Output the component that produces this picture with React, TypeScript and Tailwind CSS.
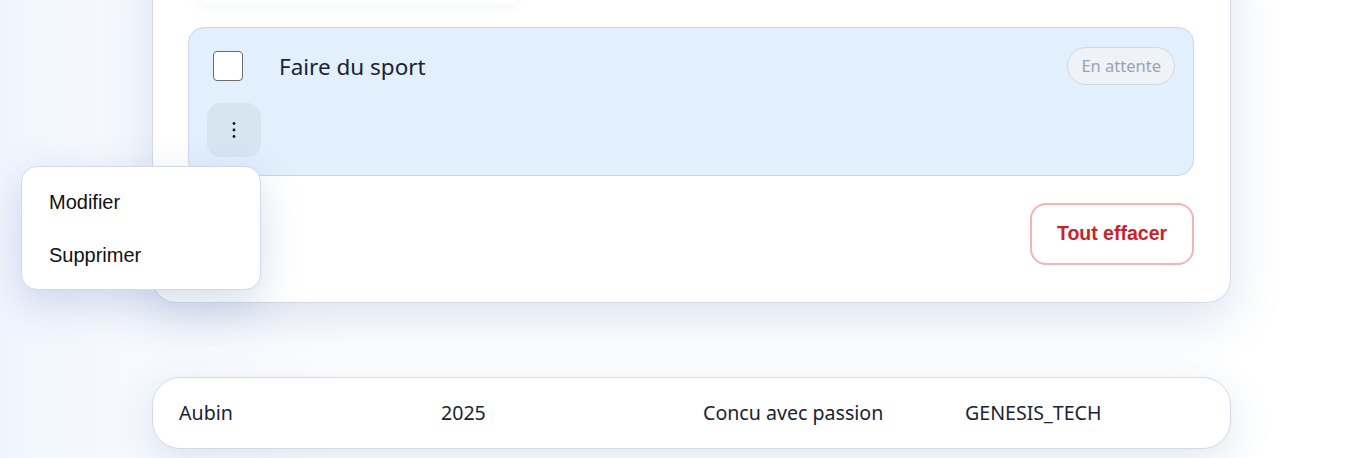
import React from "react";

const sans = { fontFamily: '"Noto Sans", "Open Sans", sans-serif' };
const arial = { fontFamily: '"Liberation Sans", Arial, sans-serif' };

function Dots() {
  return (
    <svg width="6" height="18" viewBox="0 0 6 18" fill="#111827">
      <circle cx="3" cy="2.5" r="1.4" />
      <circle cx="3" cy="9" r="1.4" />
      <circle cx="3" cy="15.5" r="1.4" />
    </svg>
  );
}

export default function App() {
  return (
    <div
      className="relative h-[458px] w-[1367px] overflow-hidden bg-[linear-gradient(90deg,#f0f5fd_0%,#f6f9fe_10%,#ffffff_25%,#ffffff_100%)]"
      style={sans}
    >
      {/* main card */}
      <div className="ml-[152px] mt-[-60px] w-[1079px] rounded-[24px] border border-[#d3dae5] bg-white pb-[37px] pt-[60px] shadow-[0_18px_50px_rgba(70,100,170,0.18)]">
        <div className="relative">
          <div className="absolute left-[40px] top-[-40px] h-[44px] w-[330px] rounded-[20px] bg-white shadow-[0_4px_12px_rgba(100,120,160,0.05)]" />
        </div>
        <div className="relative ml-[35px] mr-[36px] mt-[26px] rounded-[16px] border border-[#c9d7e6] bg-[#e2effc] px-[18px] pb-[18px] pt-[19px]">
          <div className="flex h-[38px] items-center justify-between">
            <div className="flex items-center">
              <div className="ml-[6px] h-[30px] w-[30px] rounded-[4px] border-[1.5px] border-[#6b6b6b] bg-white" />
              <span className="ml-[36px] mt-[3px] text-[22.5px] leading-none text-[#1a2233]">Faire du sport</span>
            </div>
            <span className="flex h-[38px] items-center rounded-full border border-[#d3d9e2] bg-[#eff2f7] px-[13px] text-[16.5px] text-[#9aa3b5]">
              En attente
            </span>
          </div>
          <div className="mt-[18px] flex h-[54px] w-[54px] items-center justify-center rounded-[14px] bg-[#d7e5f1]">
            <Dots />
          </div>
        </div>
        <div className="mr-[36px] mt-[27px] flex justify-end">
          <button
            className="h-[62px] w-[164px] rounded-[16px] border-2 border-[#fcb0b3] bg-white text-[19.5px] font-bold text-[#c8232b]"
            style={arial}
          >
            Tout effacer
          </button>
        </div>
      </div>

      {/* footer */}
      <div className="ml-[152px] mt-[74px] flex h-[72px] w-[1079px] items-center rounded-[28px] border border-[#d3dae5] bg-white pl-[26px] text-[19.6px] text-[#1a2233] shadow-[0_12px_40px_rgba(70,100,170,0.16)]">
        <div className="w-[262px]">Aubin</div>
        <div className="w-[262px]">2025</div>
        <div className="w-[262px]">Concu avec passion</div>
        <div className="w-[262px]">GENESIS_TECH</div>
      </div>

      {/* dropdown menu */}
      <div
        className="absolute left-[21px] top-[166px] w-[240px] rounded-[16px] border border-[#d3dae5] bg-white py-[8px] shadow-[0_14px_40px_rgba(70,100,170,0.22)]"
        style={arial}
      >
        <div className="flex h-[53px] items-center pl-[27px] text-[20px] text-[#111]">Modifier</div>
        <div className="flex h-[53px] items-center pl-[27px] text-[20px] text-[#111]">Supprimer</div>
      </div>
    </div>
  );
}
